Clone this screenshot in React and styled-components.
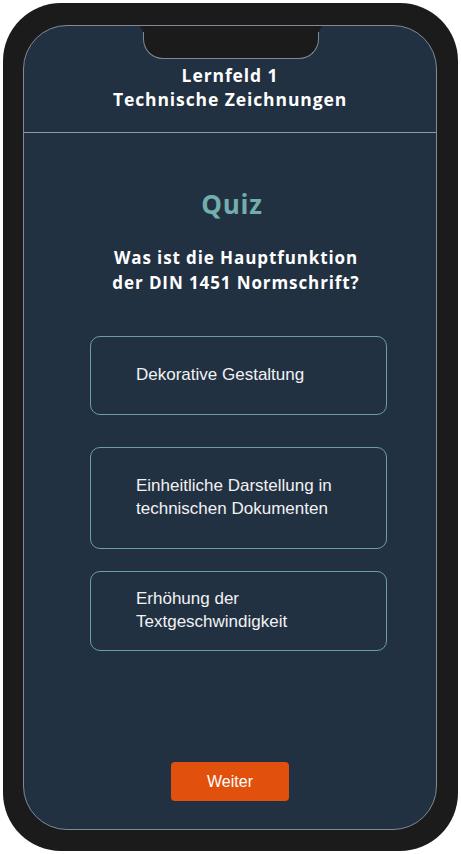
import React from "react";
import styled, { createGlobalStyle } from "styled-components";

const GlobalStyle = createGlobalStyle`
  html, body {
    margin: 0;
    padding: 0;
    background: #ffffff;
  }
  * {
    box-sizing: border-box;
  }
`;

const Page = styled.div`
  width: 461px;
  height: 854px;
  padding: 3px;
`;

const PhoneFrame = styled.div`
  width: 455px;
  height: 848px;
  background: #1b1b1b;
  border-radius: 58px;
  padding: 22px 21px 21px 20px;
`;

const Screen = styled.div`
  position: relative;
  height: 100%;
  background: #213142;
  border: 1px solid #7d8b98;
  border-radius: 44px;
  display: flex;
  flex-direction: column;
  overflow: hidden;
`;

const Notch = styled.div`
  position: absolute;
  top: -1px;
  left: 119px;
  width: 176px;
  height: 34px;
  background: #1b1b1b;
  border: 1px solid #7d8b98;
  border-top: none;
  border-radius: 0 0 20px 20px;

  &::before,
  &::after {
    content: "";
    position: absolute;
    top: 0;
    width: 8px;
    height: 8px;
    background: transparent;
  }
  &::before {
    left: -9px;
    border-top-right-radius: 8px;
    box-shadow: 3px -3px 0 2px #1b1b1b;
  }
  &::after {
    right: -9px;
    border-top-left-radius: 8px;
    box-shadow: -3px -3px 0 2px #1b1b1b;
  }
`;

const Header = styled.header`
  padding: 37px 0 21px;
  border-bottom: 1px solid #8c99a6;
  text-align: center;
  color: #ffffff;
  font-family: "Open Sans", "Noto Sans", sans-serif;
  font-weight: 700;
  font-size: 17.5px;
  letter-spacing: 0.9px;
  line-height: 24px;
`;

const Content = styled.main`
  flex: 1;
  display: flex;
  flex-direction: column;
  align-items: center;
  padding: 55px 0 28px;
`;

const QuizTitle = styled.h1`
  margin: 0;
  color: #74adad;
  font-family: "Open Sans", "Noto Sans", sans-serif;
  font-weight: 700;
  font-size: 26px;
  letter-spacing: 0.8px;
  line-height: 32px;
  padding-left: 4px;
`;

const Question = styled.h2`
  margin: 25px 0 0;
  color: #ffffff;
  font-family: "Open Sans", "Noto Sans", sans-serif;
  font-weight: 700;
  font-size: 17px;
  letter-spacing: 0.9px;
  line-height: 25px;
  text-align: center;
  padding-left: 12px;
`;

const OptionList = styled.div`
  align-self: flex-start;
  margin: 41px 0 0 66px;
  width: 297px;
  display: flex;
  flex-direction: column;
`;

const Option = styled.button`
  display: flex;
  align-items: center;
  width: 100%;
  height: ${(p) => p.$h}px;
  margin-top: ${(p) => p.$gap}px;
  padding: 0 20px 3px 45px;
  background: transparent;
  border: 1px solid #6a9fa3;
  border-radius: 10px;
  color: #f2f2f2;
  font-family: "Liberation Sans", Arial, sans-serif;
  font-size: 17px;
  line-height: 23px;
  text-align: left;
  cursor: pointer;
`;

const NextButton = styled.button`
  margin-top: auto;
  width: 118px;
  height: 39px;
  background: #e2500e;
  border: none;
  border-radius: 4px;
  color: #ffffff;
  font-family: "Liberation Sans", Arial, sans-serif;
  font-size: 16px;
  cursor: pointer;
`;

const options = [
  { lines: ["Dekorative Gestaltung"], h: 79, gap: 0 },
  { lines: ["Einheitliche Darstellung in", "technischen Dokumenten"], h: 102, gap: 32 },
  { lines: ["Erhöhung der", "Textgeschwindigkeit"], h: 80, gap: 22 },
];

const App = () => {
  return (
    <>
      <GlobalStyle />
      <Page>
        <PhoneFrame>
          <Screen>
            <Notch />
            <Header>
              Lernfeld 1
              <br />
              Technische Zeichnungen
            </Header>
            <Content>
              <QuizTitle>Quiz</QuizTitle>
              <Question>
                Was ist die Hauptfunktion
                <br />
                der DIN 1451 Normschrift?
              </Question>
              <OptionList>
                {options.map((o) => (
                  <Option key={o.lines[0]} $h={o.h} $gap={o.gap}>
                    <span>
                      {o.lines.map((l, i) => (
                        <React.Fragment key={l}>
                          {i > 0 && <br />}
                          {l}
                        </React.Fragment>
                      ))}
                    </span>
                  </Option>
                ))}
              </OptionList>
              <NextButton>Weiter</NextButton>
            </Content>
          </Screen>
        </PhoneFrame>
      </Page>
    </>
  );
};

export default App;
